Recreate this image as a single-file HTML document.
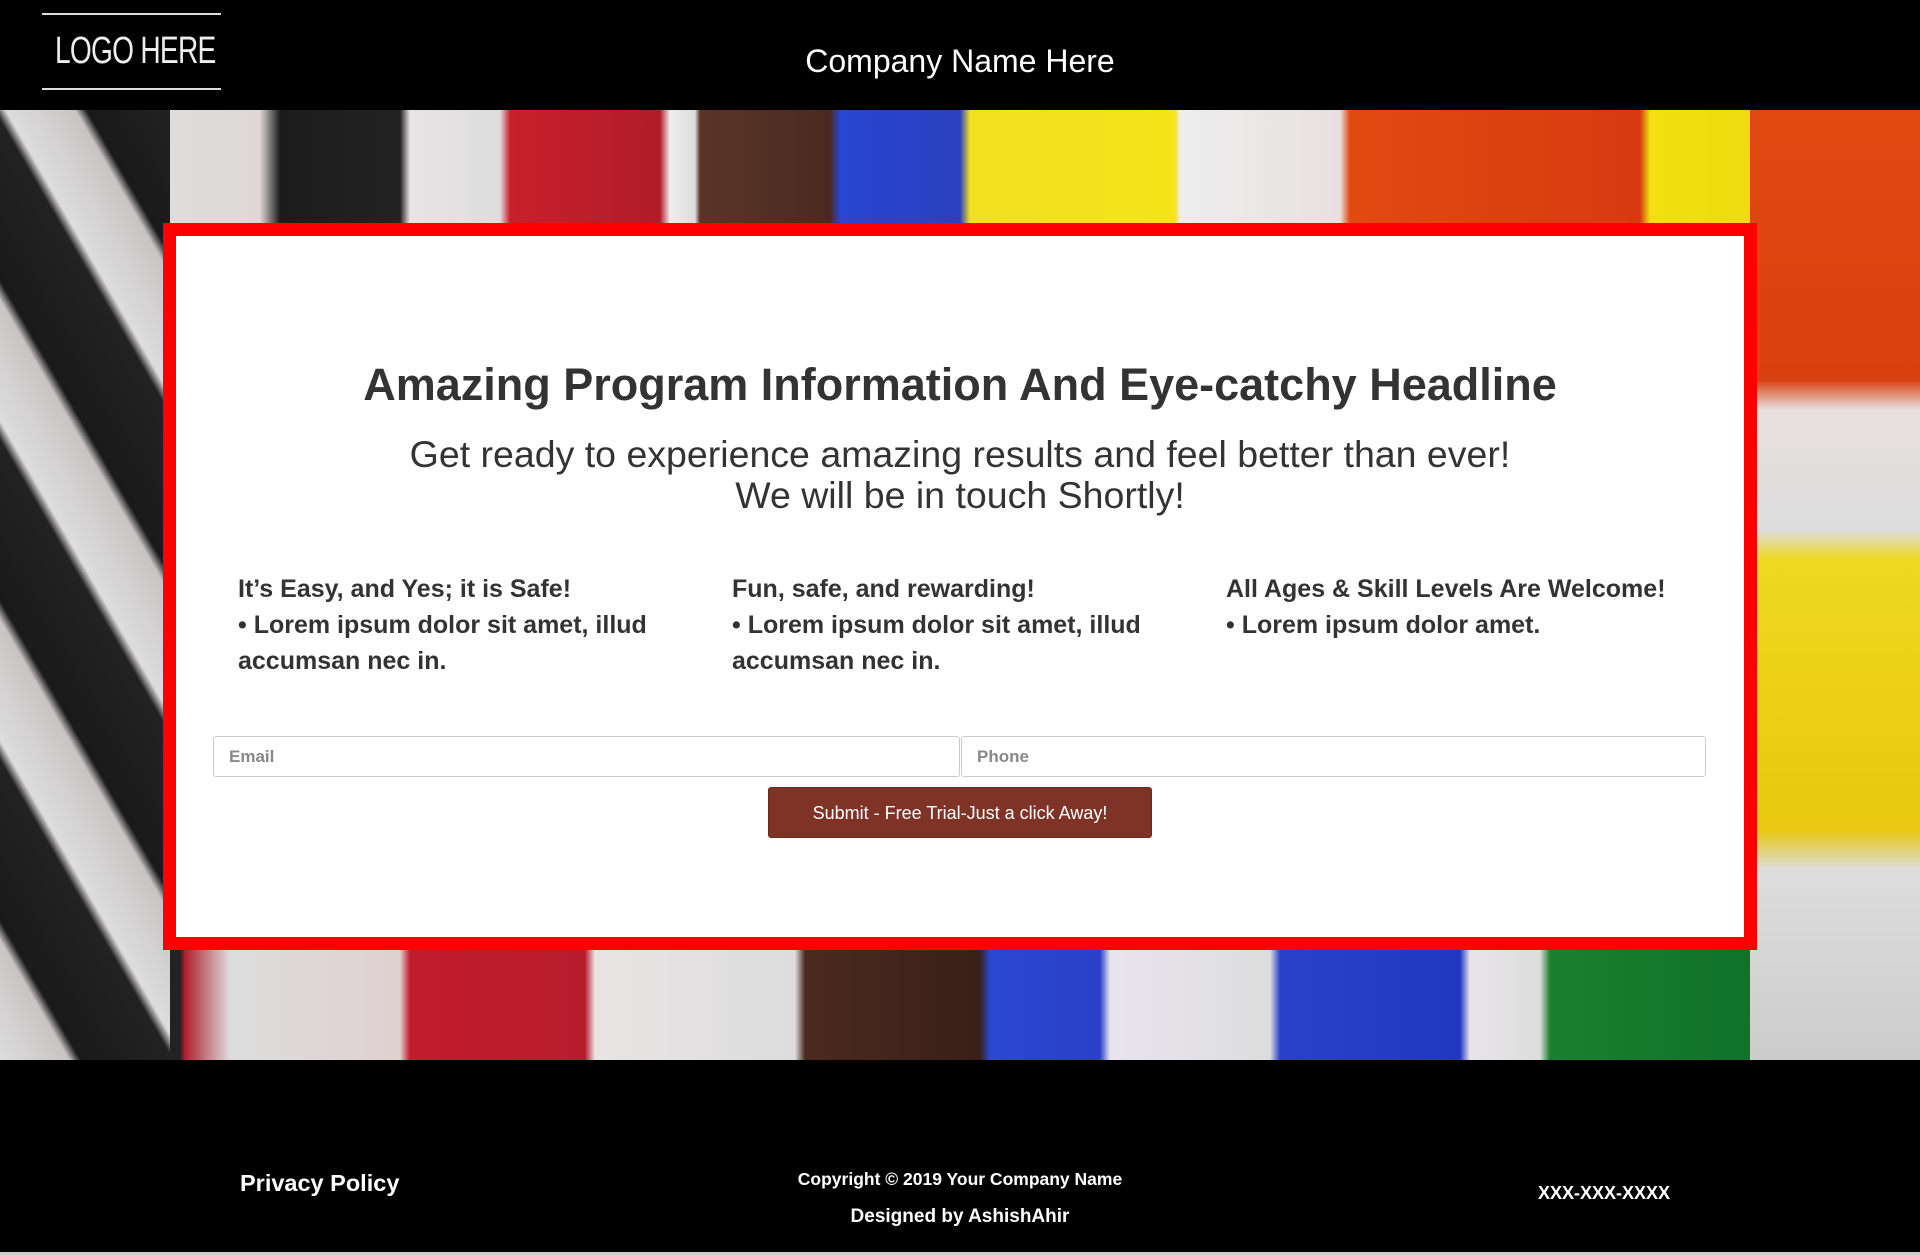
<!DOCTYPE html>
<html><head><meta charset="utf-8"><style>
*{margin:0;padding:0;box-sizing:border-box}
body{width:1920px;height:1255px;background:#000;font-family:"Liberation Sans",Arial,sans-serif;position:relative;overflow:hidden}
.hdr{position:absolute;left:0;top:0;width:1920px;height:110px;background:#000}
.logo{position:absolute;left:42px;top:13px;width:179px;height:77px;border-top:2px solid #ddd;border-bottom:2px solid #ddd}
.logo span{position:absolute;left:13px;top:0;white-space:nowrap;color:#eee;font-family:"Liberation Sans Narrow","Liberation Sans",sans-serif;font-size:38px;line-height:73px;letter-spacing:-1px;transform:scaleX(.74);transform-origin:left}
.cn{position:absolute;left:0;width:1920px;top:43px;text-align:center;color:#fff;font-size:32px}
.bg{position:absolute;left:0;top:110px;width:1920px;height:950px;overflow:hidden}
.top{position:absolute;left:0;top:0;width:1920px;height:115px;background:linear-gradient(90deg,#2a2a2a 0,#ddd 140px,#e0d8d8 260px,#1c1c1c 280px,#222 400px,#e8e4e6 410px,#ddd 500px,#c8202c 510px,#b01c28 660px,#eee 670px,#ddd 695px,#5a3428 700px,#4a2a20 830px,#2846d0 840px,#2a40c0 960px,#f0e020 970px,#f4e418 1175px,#eee 1180px,#e8e0e0 1340px,#e04a10 1350px,#d83a10 1640px,#f4e010 1650px,#e8d010 1920px)}
.bot{position:absolute;left:0;top:840px;width:1920px;height:110px;background:linear-gradient(90deg,#1a1a1a 0,#222 180px,#b02030 185px,#ddd 230px,#e0d0d0 400px,#c01c2c 410px,#b81c2c 585px,#e8e4e4 595px,#ddd 795px,#4a2a20 805px,#3a2018 980px,#2a48d0 990px,#2a40c8 1100px,#e8e4ee 1110px,#ddd 1270px,#2a40c8 1280px,#2038c0 1460px,#e8e4e8 1470px,#ddd 1540px,#1a8030 1550px,#107028 1770px,#ddd 1780px,#ccc 1920px)}
.left{position:absolute;left:0;top:0;width:170px;height:950px;background:repeating-linear-gradient(60deg,#ddd 0,#c8c4c4 60px,#1a1a1a 70px,#222 150px,#e0dcdc 160px)}
.right{position:absolute;right:0;top:0;width:170px;height:950px;background:linear-gradient(180deg,#e04a10 0,#d84010 270px,#e8e0e0 300px,#ddd 420px,#f0d820 450px,#e8c810 720px,#ddd 760px,#ccc 950px)}
.box{position:absolute;left:163px;top:223px;width:1594px;height:727px;background:#fff;border:13px solid #ff0000}
h1{position:absolute;left:0;width:100%;top:123px;text-align:center;font-size:45px;color:#333;font-weight:bold}
.sub{position:absolute;left:0;width:100%;top:198px;text-align:center;font-size:37.5px;color:#333;line-height:41px}
.col{position:absolute;top:335px;font-size:25px;font-weight:bold;color:#333;line-height:36px;width:450px}
.in{position:absolute;top:500px;height:41px;border:1px solid #ccc;border-radius:3px;font-size:17px;font-weight:bold;color:#888;padding:10px 15px}
.btn{position:absolute;left:592px;top:551px;width:384px;height:51px;background:#7f3326;border-radius:3px;color:#fff;font-size:18px;text-align:center;line-height:51px;border:1px solid #6a2a20}
.f{position:absolute;color:#fff;font-weight:bold}
</style></head><body>
<div class="hdr"><div class="logo"><span>LOGO HERE</span></div><div class="cn">Company Name Here</div></div>
<div class="bg"><div class="top"></div><div class="bot"></div><div class="left"></div><div class="right"></div></div>
<div class="box">
<h1>Amazing Program Information And Eye-catchy Headline</h1>
<div class="sub">Get ready to experience amazing results and feel better than ever!<br>We will be in touch Shortly!</div>
<div class="col" style="left:62px">It’s Easy, and Yes; it is Safe!<br>• Lorem ipsum dolor sit amet, illud accumsan nec in.</div>
<div class="col" style="left:556px">Fun, safe, and rewarding!<br>• Lorem ipsum dolor sit amet, illud accumsan nec in.</div>
<div class="col" style="left:1050px;width:480px">All Ages &amp; Skill Levels Are Welcome!<br>• Lorem ipsum dolor amet.</div>
<div class="in" style="left:37px;width:747px">Email</div>
<div class="in" style="left:785px;width:745px">Phone</div>
<div class="btn">Submit - Free Trial-Just a click Away!</div>
</div>
<div class="f" style="left:240px;top:1170px;font-size:23.5px">Privacy Policy</div>
<div class="f" style="left:0;width:1920px;text-align:center;top:1169px;font-size:17.5px">Copyright © 2019 Your Company Name</div>
<div class="f" style="left:0;width:1920px;text-align:center;top:1206px;font-size:19px">Designed by AshishAhir</div>
<div class="f" style="left:1500px;width:208px;text-align:center;top:1183px;font-size:18px">XXX-XXX-XXXX</div>
<div style="position:absolute;left:0;top:1252px;width:1920px;height:3px;background:#ccc"></div>
</body></html>
